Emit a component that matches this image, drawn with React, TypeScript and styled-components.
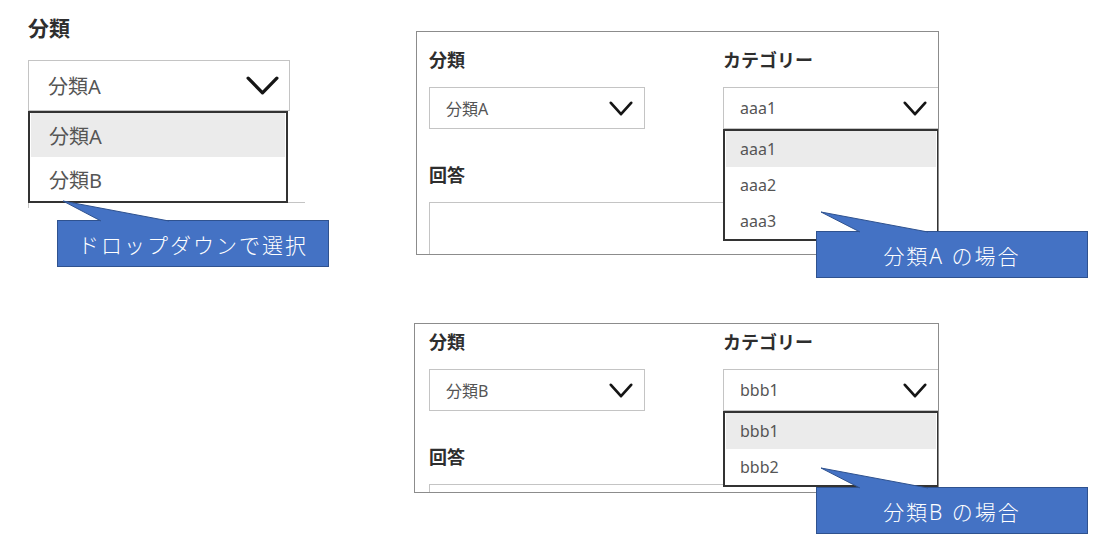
import React from "react";
import styled, { createGlobalStyle } from "styled-components";

const GlobalStyle = createGlobalStyle`
  html, body { margin: 0; padding: 0; background: #ffffff; }
  body { font-family: "Noto Sans", "Noto Sans CJK JP", sans-serif; }
  * { box-sizing: border-box; }
`;

type Size = "lg" | "sm";

const Page = styled.div`
  display: flex;
  align-items: flex-start;
  width: 1099px;
  height: 542px;
  overflow: hidden;
  background: #fff;
`;

const LeftSection = styled.section`
  position: relative;
  flex: none;
  width: 414px;
  padding: 14px 0 0 28px;
`;

const RightColumn = styled.div`
  display: flex;
  flex-direction: column;
  gap: 68px;
  padding-top: 31px;
`;

const Label = styled.div<{ $size: Size }>`
  font-family: "Noto Sans CJK JP", sans-serif;
  font-weight: 700;
  color: #2e2e2e;
  font-size: ${(p) => (p.$size === "lg" ? 21 : 18)}px;
  line-height: ${(p) => (p.$size === "lg" ? 26 : 22)}px;
  margin-bottom: ${(p) => (p.$size === "lg" ? 20 : 17)}px;
  white-space: nowrap;
`;

const SelectWrap = styled.div`
  position: relative;
`;

const SelectBox = styled.div<{ $size: Size }>`
  display: flex;
  align-items: center;
  justify-content: space-between;
  width: ${(p) => (p.$size === "lg" ? 262 : 216)}px;
  height: ${(p) => (p.$size === "lg" ? 51 : 42)}px;
  padding: ${(p) => (p.$size === "lg" ? "0 10px 0 19px" : "0 11px 0 16px")};
  border: 1px solid #c4c4c4;
  background: #fff;
  color: #555;
  font-size: ${(p) => (p.$size === "lg" ? 20 : 16)}px;
`;

const DropList = styled.ul<{ $size: Size }>`
  position: absolute;
  left: 0;
  top: 100%;
  z-index: 2;
  width: ${(p) => (p.$size === "lg" ? 260 : 216)}px;
  margin: 0;
  padding: 0 1px;
  list-style: none;
  background: #fff;
  border: 2px solid #333;
`;

const DropItem = styled.li<{ $size: Size; $active?: boolean }>`
  display: flex;
  align-items: center;
  height: ${(p) => (p.$size === "lg" ? 44 : 36)}px;
  padding-left: ${(p) => (p.$size === "lg" ? 18 : 14)}px;
  background: ${(p) => (p.$active ? "#ebebeb" : "transparent")};
  color: #555;
  font-size: ${(p) => (p.$size === "lg" ? 20 : 16)}px;
`;

const HiddenField = styled.div`
  width: 277px;
  height: 6px;
  margin-top: 91px;
  border-top: 1px solid #c4c4c4;
  border-left: 1px solid #c4c4c4;
`;

const PanelFrame = styled.div<{ $shift: number }>`
  position: relative;
  margin-left: ${(p) => p.$shift}px;
`;

const Panel = styled.div<{ $width: number; $height: number; $padTop: number; $padLeft: number }>`
  width: ${(p) => p.$width}px;
  height: ${(p) => p.$height}px;
  padding: ${(p) => p.$padTop}px 0 0 ${(p) => p.$padLeft}px;
  border: 1px solid #8c8c8c;
  overflow: hidden;
  background: #fff;
`;

const FieldRow = styled.div`
  display: flex;
  gap: 78px;
  margin-bottom: 34px;
`;

const Field = styled.div`
  flex: none;
  width: 216px;
`;

const TextArea = styled.div`
  width: 520px;
  height: 80px;
  margin-top: 1px;
  border: 1px solid #c4c4c4;
`;

const CalloutBox = styled.div<{ $left: number; $top: number }>`
  position: absolute;
  left: ${(p) => p.$left}px;
  top: ${(p) => p.$top}px;
  z-index: 5;
  display: flex;
  align-items: center;
  justify-content: center;
  width: 272px;
  height: 47px;
  background: #4472c4;
  border: 1px solid #2f528f;
  color: #ffffff;
  font-family: "Noto Sans", "Noto Sans CJK JP", sans-serif;
  font-weight: 300;
  font-size: 21px;
  letter-spacing: 2px;
  white-space: nowrap;
`;

const TailSvg = styled.svg`
  position: absolute;
  left: -1px;
  top: -21px;
  overflow: visible;
`;

const Chevron: React.FC<{ size: Size }> = ({ size }) => {
  const w = size === "lg" ? 33 : 24;
  const h = size === "lg" ? 19 : 15;
  const sw = size === "lg" ? 3.3 : 2.7;
  const o = sw / 2 + 0.5;
  return (
    <svg width={w} height={h} viewBox={`0 0 ${w} ${h}`}>
      <polyline
        points={`${o},${o} ${w / 2},${h - o} ${w - o},${o}`}
        fill="none"
        stroke="#151515"
        strokeWidth={sw}
        strokeLinecap="round"
        strokeLinejoin="round"
      />
    </svg>
  );
};

const Callout: React.FC<{ left: number; top: number; apex: number; children: React.ReactNode }> = ({
  left,
  top,
  apex,
  children,
}) => (
  <CalloutBox $left={left} $top={top}>
    <TailSvg width="120" height="24">
      <polygon points={`${apex},1 112,21 112,23 44,23 44,21`} fill="#4472c4" />
      <polyline points={`44,21 ${apex},1 112,21`} fill="none" stroke="#2f528f" strokeWidth="1" />
    </TailSvg>
    {children}
  </CalloutBox>
);

const Select: React.FC<{
  size: Size;
  value: string;
  options?: string[];
}> = ({ size, value, options }) => (
  <SelectWrap>
    <SelectBox $size={size}>
      <span>{value}</span>
      <Chevron size={size} />
    </SelectBox>
    {options && (
      <DropList $size={size}>
        {options.map((o) => (
          <DropItem key={o} $size={size} $active={o === value}>
            {o}
          </DropItem>
        ))}
      </DropList>
    )}
  </SelectWrap>
);

const FormPanel: React.FC<{
  cls: string;
  cat: string;
  options: string[];
  width: number;
  height: number;
  padTop: number;
  padLeft: number;
  shift: number;
  calloutTop: number;
  calloutLeft: number;
  calloutText: string;
}> = (p) => (
  <PanelFrame $shift={p.shift}>
    <Panel $width={p.width} $height={p.height} $padTop={p.padTop} $padLeft={p.padLeft}>
      <FieldRow>
        <Field>
          <Label $size="sm">分類</Label>
          <Select size="sm" value={p.cls} />
        </Field>
        <Field>
          <Label $size="sm">カテゴリー</Label>
          <Select size="sm" value={p.cat} options={p.options} />
        </Field>
      </FieldRow>
      <Label $size="sm">回答</Label>
      <TextArea />
    </Panel>
    <Callout left={p.calloutLeft} top={p.calloutTop} apex={5}>
      {p.calloutText}
    </Callout>
  </PanelFrame>
);

export default function App() {
  return (
    <Page>
      <GlobalStyle />
      <LeftSection>
        <Label $size="lg">分類</Label>
        <Select size="lg" value="分類A" options={["分類A", "分類B"]} />
        <HiddenField />
        <Callout left={57} top={220} apex={6}>
          ドロップダウンで選択
        </Callout>
      </LeftSection>
      <RightColumn>
        <FormPanel
          cls="分類A"
          cat="aaa1"
          options={["aaa1", "aaa2", "aaa3"]}
          width={523}
          height={224}
          padTop={16}
          padLeft={12}
          shift={2}
          calloutLeft={400}
          calloutTop={200}
          calloutText="分類A の場合"
        />
        <FormPanel
          cls="分類B"
          cat="bbb1"
          options={["bbb1", "bbb2"]}
          width={525}
          height={170}
          padTop={6}
          padLeft={14}
          shift={0}
          calloutLeft={402}
          calloutTop={164}
          calloutText="分類B の場合"
        />
      </RightColumn>
    </Page>
  );
}
